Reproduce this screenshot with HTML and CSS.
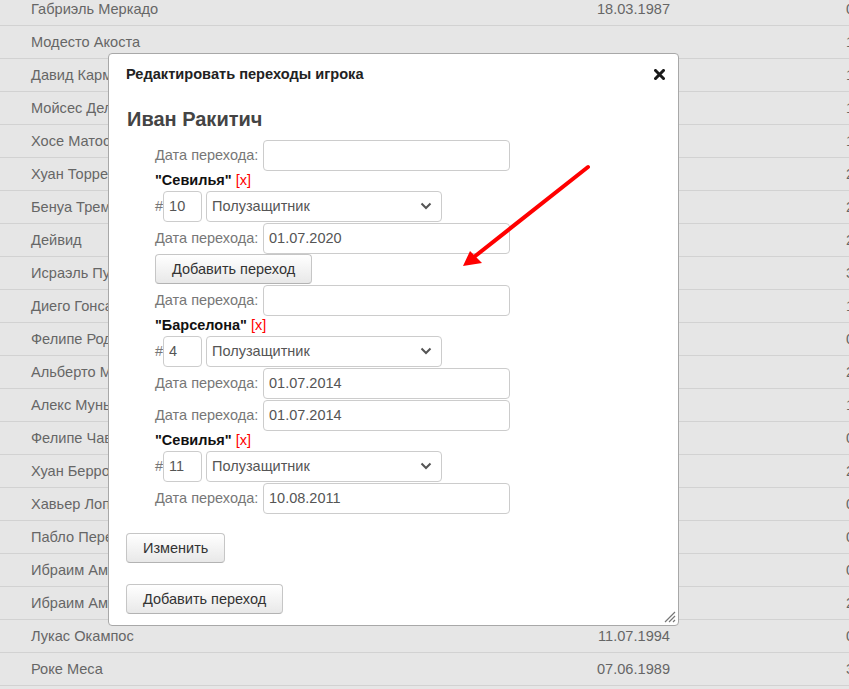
FILE: index.html
```html
<!DOCTYPE html>
<html lang="ru">
<head>
<meta charset="utf-8">
<title>Переходы</title>
<link rel="stylesheet" href="styles.css">
</head>
<body>
<table class="players">
  <tr><td class="name">Габриэль Меркадо</td><td class="date">18.03.1987</td><td class="num">0 1</td></tr>
  <tr><td class="name">Модесто Акоста</td><td class="date"></td><td class="num">1 0</td></tr>
  <tr><td class="name">Давид Кармона</td><td class="date">11.01.1997</td><td class="num">1 0</td></tr>
  <tr><td class="name">Мойсес Делгадо</td><td class="date">03.03.1994</td><td class="num">1 0</td></tr>
  <tr><td class="name">Хосе Матос</td><td class="date">19.08.1995</td><td class="num">1 0</td></tr>
  <tr><td class="name">Хуан Торрес</td><td class="date">07.05.1997</td><td class="num">2 0</td></tr>
  <tr><td class="name">Бенуа Тремулинас</td><td class="date">28.12.1985</td><td class="num">2 0</td></tr>
  <tr><td class="name">Дейвид</td><td class="date">06.01.1990</td><td class="num">2 0</td></tr>
  <tr><td class="name">Исраэль Пуэрто</td><td class="date">29.06.1993</td><td class="num">3 0</td></tr>
  <tr><td class="name">Диего Гонсалес</td><td class="date">28.01.1995</td><td class="num">1 0</td></tr>
  <tr><td class="name">Фелипе Родригес</td><td class="date">15.03.1991</td><td class="num">0 0</td></tr>
  <tr><td class="name">Альберто Морено</td><td class="date">05.07.1992</td><td class="num">2 0</td></tr>
  <tr><td class="name">Алекс Муньос</td><td class="date">18.06.1994</td><td class="num">1 0</td></tr>
  <tr><td class="name">Фелипе Чавес</td><td class="date">22.02.1996</td><td class="num">0 0</td></tr>
  <tr><td class="name">Хуан Берроканаль</td><td class="date">12.11.1990</td><td class="num">2 0</td></tr>
  <tr><td class="name">Хавьер Лопес</td><td class="date">06.04.1995</td><td class="num">0 0</td></tr>
  <tr><td class="name">Пабло Перес</td><td class="date">16.09.1993</td><td class="num">0 0</td></tr>
  <tr><td class="name">Ибраим Амаду</td><td class="date">23.01.1993</td><td class="num">0 0</td></tr>
  <tr><td class="name">Ибраим Амаду</td><td class="date">23.01.1993</td><td class="num">2 0</td></tr>
  <tr><td class="name">Лукас Окампос</td><td class="date">11.07.1994</td><td class="num">0 0</td></tr>
  <tr><td class="name">Роке Меса</td><td class="date">07.06.1989</td><td class="num">3 0</td></tr>
</table>

<div class="dialog">
  <div class="dialog-title">
    <span>Редактировать переходы игрока</span>
    <svg class="close" width="11" height="11" viewBox="0 0 11 11"><path d="M1.5 1.5 L9.5 9.5 M9.5 1.5 L1.5 9.5" stroke="#1a1a1a" stroke-width="3" stroke-linecap="square"/></svg>
  </div>
  <div class="dialog-body">
    <h2 class="player">Иван Ракитич</h2>
    <div class="form">
      <div class="row"><span class="label">Дата перехода:</span><input class="date-input" type="text" value=""></div>
      <div class="club">"Севилья" <span class="del">[x]</span></div>
      <div class="row"><span class="hash">#</span><input class="number" type="text" value="10"><div class="select"><span>Полузащитник</span><svg width="12" height="8" viewBox="0 0 12 8"><path d="M1.5 1.5 L6 6 L10.5 1.5" fill="none" stroke="#555" stroke-width="2"/></svg></div></div>
      <div class="row"><span class="label">Дата перехода:</span><input class="date-input" type="text" value="01.07.2020"></div>
      <div class="btn-row"><button class="btn">Добавить переход</button></div>
      <div class="row"><span class="label">Дата перехода:</span><input class="date-input" type="text" value=""></div>
      <div class="club">"Барселона" <span class="del">[x]</span></div>
      <div class="row"><span class="hash">#</span><input class="number" type="text" value="4"><div class="select"><span>Полузащитник</span><svg width="12" height="8" viewBox="0 0 12 8"><path d="M1.5 1.5 L6 6 L10.5 1.5" fill="none" stroke="#555" stroke-width="2"/></svg></div></div>
      <div class="row"><span class="label">Дата перехода:</span><input class="date-input" type="text" value="01.07.2014"></div>
      <div class="row"><span class="label">Дата перехода:</span><input class="date-input" type="text" value="01.07.2014"></div>
      <div class="club">"Севилья" <span class="del">[x]</span></div>
      <div class="row"><span class="hash">#</span><input class="number" type="text" value="11"><div class="select"><span>Полузащитник</span><svg width="12" height="8" viewBox="0 0 12 8"><path d="M1.5 1.5 L6 6 L10.5 1.5" fill="none" stroke="#555" stroke-width="2"/></svg></div></div>
      <div class="row"><span class="label">Дата перехода:</span><input class="date-input" type="text" value="10.08.2011"></div>
    </div>
    <div class="actions">
      <button class="btn">Изменить</button>
      <button class="btn">Добавить переход</button>
    </div>
  </div>
  <svg class="grip" width="14" height="14" viewBox="0 0 14 14"><path d="M13 3 L3 13 M13 7 L7 13 M13 11 L11 13" stroke="#777" stroke-width="1.2"/></svg>
</div>

<svg class="arrow" width="849" height="689" viewBox="0 0 849 689">
  <line x1="588" y1="167" x2="474" y2="257" stroke="#f00" stroke-width="4" stroke-linecap="round"/>
  <polygon points="463,266 470,251 482,263" fill="#f00"/>
</svg>
</body>
</html>
```

FILE: styles.css
```css
html, body {
  margin: 0;
  padding: 0;
  height: 100%;
  overflow: hidden;
  background: #e6e6e6;
  font-family: "Liberation Sans", Arial, sans-serif;
  font-size: 14.5px;
}

.players {
  border-collapse: collapse;
  margin-top: -7px;
  width: 1000px;
}
.players td {
  height: 32px;
  padding: 0;
  border-bottom: 1px solid #d2d2d2;
  color: #666;
  vertical-align: middle;
  white-space: nowrap;
  font-size: 14.6px;
}
.players .name { padding-left: 31px; width: 400px; }
.players .date { width: 239px; text-align: right; }
.players .num { padding-left: 176px; }

.dialog {
  position: absolute;
  left: 108px;
  top: 53px;
  width: 569px;
  height: 571px;
  background: #fff;
  border: 1px solid #a8a8a8;
  border-radius: 4px;
  display: flex;
  flex-direction: column;
}

.dialog-title {
  height: 40px;
  padding: 0 13px 0 17px;
  display: flex;
  align-items: center;
  justify-content: space-between;
  font-weight: bold;
  color: #222;
  font-size: 14.6px;
}
.dialog-title .close { display: block; }

.dialog-body {
  padding: 0 0 0 17px;
}

.player {
  margin: 13px 0 8px 1px;
  font-size: 20px;
  line-height: 24px;
  font-weight: bold;
  color: #444;
}

.form {
  padding-left: 29px;
}
.row {
  height: 32px;
  display: flex;
  align-items: center;
}
.label {
  color: #777;
  width: 108px;
  white-space: nowrap;
}
.date-input {
  box-sizing: border-box;
  width: 247px;
  height: 31px;
  border: 1px solid #ccc;
  border-radius: 4px;
  padding: 0 5px;
  font-family: inherit;
  font-size: 14.5px;
  color: #555;
  margin: 0;
  background: #fff;
}
.club {
  height: 19px;
  line-height: 19px;
  font-weight: bold;
  color: #111;
}
.del {
  font-weight: normal;
  color: #f00;
}
.hash {
  color: #777;
  flex: none;
  margin-right: 0;
}
.number {
  box-sizing: border-box;
  flex: none;
  width: 39px;
  height: 31px;
  border: 1px solid #ccc;
  border-radius: 4px;
  padding: 0 5px;
  font-family: inherit;
  font-size: 14.5px;
  color: #555;
  margin: 0 4px 0 0;
}
.select {
  box-sizing: border-box;
  width: 236px;
  height: 31px;
  border: 1px solid #ccc;
  border-radius: 4px;
  padding: 0 9px 0 5px;
  display: flex;
  align-items: center;
  justify-content: space-between;
  color: #555;
}
.btn-row {
  height: 30px;
  display: flex;
  align-items: center;
}
.btn {
  box-sizing: border-box;
  height: 30px;
  padding: 0 16px;
  border: 1px solid #c6c6c6;
  border-bottom-color: #b3b3b3;
  border-radius: 4px;
  background: linear-gradient(#fff, #e8e8e8);
  font-family: inherit;
  font-size: 14.5px;
  color: #333;
  margin: 0;
}
.actions {
  display: flex;
  flex-direction: column;
  align-items: flex-start;
  gap: 21px;
  margin-top: 19px;
}
.grip {
  position: absolute;
  right: 2px;
  bottom: 2px;
}
.arrow {
  position: absolute;
  left: 0;
  top: 0;
  pointer-events: none;
}
```
